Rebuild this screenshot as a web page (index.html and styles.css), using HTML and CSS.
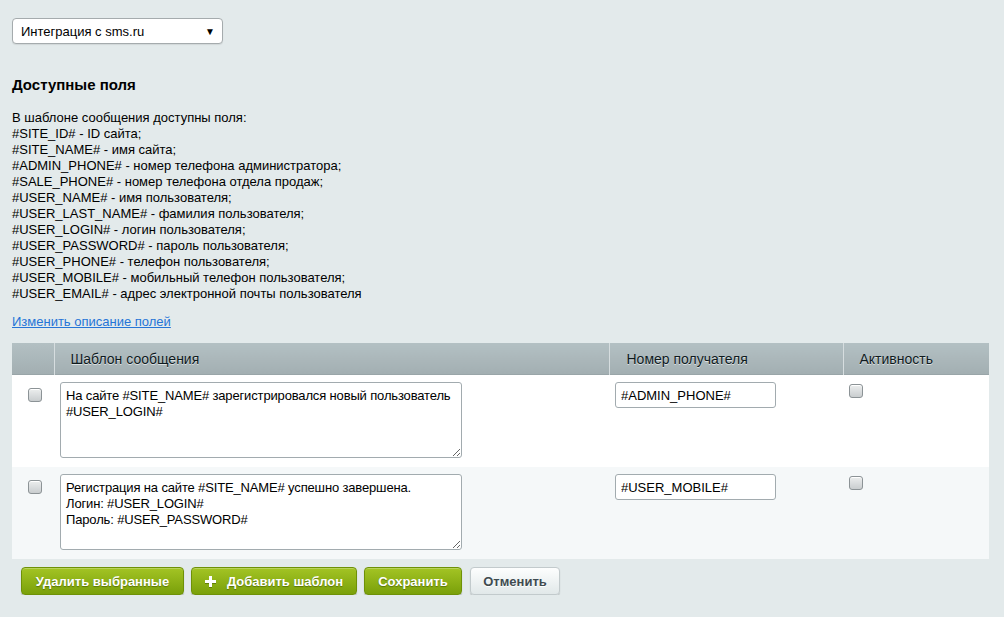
FILE: index.html
```html
<!DOCTYPE html>
<html lang="ru">
<head>
    <meta charset="UTF-8">
    <title>Интеграция с sms.ru</title>
    <link rel="stylesheet" href="styles.css">
</head>
<body>
    <div class="select">
        <span>Интеграция с sms.ru</span>
        <span class="select-arrow">&#9660;</span>
    </div>

    <h3 class="title">Доступные поля</h3>

    <div class="fields">
        В шаблоне сообщения доступны поля:<br>
        #SITE_ID# - ID сайта;<br>
        #SITE_NAME# - имя сайта;<br>
        #ADMIN_PHONE# - номер телефона администратора;<br>
        #SALE_PHONE# - номер телефона отдела продаж;<br>
        #USER_NAME# - имя пользователя;<br>
        #USER_LAST_NAME# - фамилия пользователя;<br>
        #USER_LOGIN# - логин пользователя;<br>
        #USER_PASSWORD# - пароль пользователя;<br>
        #USER_PHONE# - телефон пользователя;<br>
        #USER_MOBILE# - мобильный телефон пользователя;<br>
        #USER_EMAIL# - адрес электронной почты пользователя
    </div>

    <a href="#" class="edit-link">Изменить описание полей</a>

    <table class="list">
        <thead>
            <tr>
                <th class="col-check"></th>
                <th class="col-text">Шаблон сообщения</th>
                <th class="col-phone">Номер получателя</th>
                <th class="col-active">Активность</th>
            </tr>
        </thead>
        <tbody>
            <tr>
                <td class="cell-check"><span class="checkbox"></span></td>
                <td><textarea class="tpl">На сайте #SITE_NAME# зарегистрировался новый пользователь #USER_LOGIN#</textarea></td>
                <td><input type="text" class="phone" value="#ADMIN_PHONE#"></td>
                <td><span class="checkbox"></span></td>
            </tr>
            <tr class="odd">
                <td class="cell-check"><span class="checkbox"></span></td>
                <td><textarea class="tpl">Регистрация на сайте #SITE_NAME# успешно завершена.
Логин: #USER_LOGIN#
Пароль: #USER_PASSWORD#</textarea></td>
                <td><input type="text" class="phone" value="#USER_MOBILE#"></td>
                <td><span class="checkbox"></span></td>
            </tr>
        </tbody>
    </table>

    <div class="buttons">
        <a href="#" class="btn btn-green btn-delete">Удалить выбранные</a>
        <a href="#" class="btn btn-green btn-add">
            <svg class="plus" width="11" height="11" viewBox="0 0 11 11"><rect x="4" y="0" width="3" height="11" fill="#fff"/><rect x="0" y="4" width="11" height="3" fill="#fff"/></svg>
            Добавить шаблон
        </a>
        <a href="#" class="btn btn-green btn-save">Сохранить</a>
        <a href="#" class="btn btn-cancel">Отменить</a>
    </div>
</body>
</html>
```

FILE: styles.css
```css
body {
    margin: 0;
    padding: 18px 15px 0 12px;
    background: #e3eaeb;
    font-family: "Liberation Sans", Arial, sans-serif;
    font-size: 13px;
    color: #000;
}
.select {
    box-sizing: border-box;
    width: 211px;
    height: 26px;
    display: flex;
    align-items: center;
    justify-content: space-between;
    padding: 0 7px 0 8px;
    background: #fff;
    border: 1px solid #a5abad;
    border-radius: 4px;
    box-shadow: 0 1px 1px rgba(0,0,0,0.08);
    color: #000;
}
.select-arrow {
    font-size: 10px;
    color: #000;
}
.title {
    margin: 32px 0 0;
    font-size: 15px;
    line-height: 18px;
    font-weight: bold;
    color: #000;
}
.fields {
    margin-top: 16px;
    line-height: 16px;
    color: #000;
}
.edit-link {
    display: block;
    width: max-content;
    margin-top: 12px;
    line-height: 16px;
    color: #2675d7;
    text-decoration: underline;
}
.list {
    margin-top: 13px;
    width: 977px;
    border-collapse: collapse;
    border-spacing: 0;
}
.list th {
    height: 32px;
    padding: 0 0 0 16px;
    box-sizing: border-box;
    text-align: left;
    font-weight: normal;
    font-size: 14px;
    color: #0e1a1e;
    text-shadow: 0 1px 0 rgba(255,255,255,0.6);
    background: linear-gradient(#b3c0c3, #a2aeb1);
    border-left: 1px solid #d6dddf;
    box-shadow: inset 0 -1px 0 #99a5a8;
    vertical-align: middle;
}
.list th.col-check {
    border-left: none;
    width: 42px;
}
.list th.col-text { width: 555px; }
.list th.col-phone { width: 234px; padding-left: 17px; }
.list td {
    background: #fff;
    padding: 7px 6px 9px;
    vertical-align: top;
}
.list tr.odd td {
    background: #f5f8f9;
}
.list td.cell-check {
    padding: 13px 0 0 16px;
}
.checkbox {
    display: block;
    box-sizing: border-box;
    width: 14px;
    height: 14px;
    border: 1px solid #8c9396;
    border-radius: 3px;
    background: linear-gradient(#eceeee, #c9cdcf);
    box-shadow: inset 0 1px 0 #fff;
}
.list td:last-child .checkbox {
    margin-top: 2px;
}
.tpl {
    display: block;
    box-sizing: border-box;
    width: 402px;
    height: 76px;
    margin: 0;
    padding: 5px 2px 5px 5px;
    border: 1px solid #a2abaf;
    border-radius: 3px;
    font-family: "Liberation Sans", Arial, sans-serif;
    font-size: 13px;
    line-height: 16px;
    letter-spacing: -0.15px;
    color: #000;
    background: #fff;
    overflow: hidden;
}
.phone {
    display: block;
    box-sizing: border-box;
    width: 161px;
    height: 26px;
    margin: 0;
    padding: 0 5px;
    border: 1px solid #a2abaf;
    border-radius: 3px;
    font-family: "Liberation Sans", Arial, sans-serif;
    font-size: 13px;
    color: #000;
    background: #fff;
}
.buttons {
    display: flex;
    gap: 7px;
    margin: 8px 0 0 9px;
}
.btn {
    box-sizing: border-box;
    height: 28px;
    display: inline-flex;
    align-items: center;
    justify-content: center;
    border-radius: 4px;
    font-weight: bold;
    font-size: 13px;
    text-decoration: none;
}
.btn-green {
    color: #fff;
    background: linear-gradient(#a3c424, #7aa00a);
    border: 1px solid #6e9107;
    text-shadow: 0 1px 1px rgba(60,80,0,0.6);
    box-shadow: 0 1px 1px rgba(0,0,0,0.25), inset 0 1px 0 rgba(255,255,255,0.25);
}
.btn-delete { width: 163px; }
.btn-add { width: 166px; }
.btn-save { width: 98px; }
.plus {
    margin-right: 11px;
    filter: drop-shadow(0 1px 0 rgba(60,80,0,0.5));
}
.btn-cancel {
    width: 90px;
    margin-left: 1px;
    color: #3f4b50;
    background: linear-gradient(#fdfefe, #e1e8e9);
    border: 1px solid #c2cacc;
    text-shadow: 0 1px 0 #fff;
    box-shadow: 0 1px 1px rgba(0,0,0,0.2);
}
```
